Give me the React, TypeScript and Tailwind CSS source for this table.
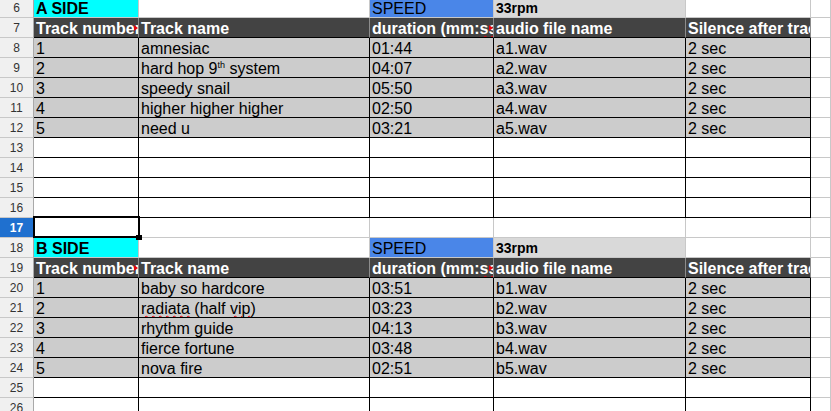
import React from 'react';

const W = ['w-[105px]', 'w-[231px]', 'w-[124px]', 'w-[192px]', 'w-[125px]'];

type Kind = 'label' | 'head' | 'data' | 'box' | 'plain';

interface CellProps {
  w: string;
  kind: Kind;
  bg?: string;
  bold?: boolean;
  arrow?: boolean;
  sel?: boolean;
  children?: React.ReactNode;
}

const Wavy: React.FC<{ children: React.ReactNode }> = ({ children }) => (
  <span className="underline decoration-wavy decoration-red-600 decoration-1 underline-offset-[1px]">
    {children}
  </span>
);

const Cell: React.FC<CellProps> = ({ w, kind, bg, bold, arrow, sel, children }) => {
  let border = 'border-[#c8c8c8]';
  if (kind === 'data' || kind === 'box') border = 'border-black';
  if (kind === 'head') border = 'border-r-[#8c8c8c] border-b-black';

  let tone = 'text-black';
  if (kind === 'head') tone = 'text-white font-bold bg-[#434343]';
  if (kind === 'data') tone = 'text-black bg-[#cccccc]';

  return (
    <div
      className={`${w} shrink-0 relative whitespace-nowrap border-r border-b pl-[2px] pt-px leading-[19px] ${
        sel ? '' : 'overflow-hidden'
      } ${border} ${tone} ${bg ?? ''} ${bold ? 'font-bold' : ''}`}
    >
      {children}
      {arrow && (
        <span className="absolute right-0 top-[7px] border-y-[3px] border-y-transparent border-l-[4px] border-l-red-600" />
      )}
      {sel && (
        <>
          <span className="absolute z-10 left-[-1px] top-[-2px] w-[107px] h-[22px] border-2 border-black" />
          <span className="absolute z-10 left-[102px] top-[17px] w-[6px] h-[5px] bg-black" />
        </>
      )}
    </div>
  );
};

const Row: React.FC<{ n: number; active?: boolean; children?: React.ReactNode }> = ({
  n,
  active,
  children,
}) => (
  <div className="flex h-[20px] shrink-0">
    <div
      className={`w-[34px] shrink-0 flex items-center justify-center border-r border-b border-r-[#a9a9a9] border-b-[#c8c8c8] text-[12px] ${
        active ? 'bg-[#1f70cf] text-white font-bold' : 'bg-[#f0f0f0] text-[#333333]'
      }`}
    >
      {n}
    </div>
    {children}
    <div className="flex-1 border-r border-b border-[#c8c8c8]" />
  </div>
);

const LabelRow: React.FC<{ n: number; side: string }> = ({ n, side }) => (
  <Row n={n}>
    <Cell w={W[0]} kind="label" bg="bg-[#00ffff]" bold>
      {side}
    </Cell>
    <Cell w={W[1]} kind="label" />
    <Cell w={W[2]} kind="label" bg="bg-[#4a86e8] text-[#14244a]">
      SPEED
    </Cell>
    <Cell w={W[3]} kind="label" bg="bg-[#d9d9d9] text-[14px]" bold>
      33rpm
    </Cell>
    <Cell w={W[4]} kind="label" />
  </Row>
);

const HeadRow: React.FC<{ n: number }> = ({ n }) => (
  <Row n={n}>
    <Cell w={W[0]} kind="head" arrow>
      Track number
    </Cell>
    <Cell w={W[1]} kind="head">
      Track name
    </Cell>
    <Cell w={W[2]} kind="head" arrow>
      duration (mm:<Wavy>ss</Wavy>)
    </Cell>
    <Cell w={W[3]} kind="head">
      audio file name
    </Cell>
    <Cell w={W[4]} kind="head">
      Silence after track
    </Cell>
  </Row>
);

const DataRow: React.FC<{ n: number; num: number; name: React.ReactNode; dur: string; file: string }> = ({
  n,
  num,
  name,
  dur,
  file,
}) => (
  <Row n={n}>
    <Cell w={W[0]} kind="data">
      {num}
    </Cell>
    <Cell w={W[1]} kind="data">
      {name}
    </Cell>
    <Cell w={W[2]} kind="data">
      {dur}
    </Cell>
    <Cell w={W[3]} kind="data">
      {file}
    </Cell>
    <Cell w={W[4]} kind="data">
      2 sec
    </Cell>
  </Row>
);

const EmptyRow: React.FC<{ n: number; kind: Kind; active?: boolean }> = ({ n, kind, active }) => (
  <Row n={n} active={active}>
    {W.map((w, i) => (
      <Cell key={i} w={w} kind={kind} sel={active && i === 0} />
    ))}
  </Row>
);

const sideA = [
  { num: 1, name: 'amnesiac', dur: '01:44', file: 'a1.wav' },
  {
    num: 2,
    name: (
      <>
        hard hop 9<span className="relative top-[-6px] text-[9px]">th</span> system
      </>
    ),
    dur: '04:07',
    file: 'a2.wav',
  },
  { num: 3, name: 'speedy snail', dur: '05:50', file: 'a3.wav' },
  { num: 4, name: 'higher higher higher', dur: '02:50', file: 'a4.wav' },
  { num: 5, name: 'need u', dur: '03:21', file: 'a5.wav' },
];

const sideB = [
  { num: 1, name: 'baby so hardcore', dur: '03:51', file: 'b1.wav' },
  {
    num: 2,
    name: (
      <>
        <Wavy>radiata</Wavy> (half <Wavy>vip</Wavy>)
      </>
    ),
    dur: '03:23',
    file: 'b2.wav',
  },
  { num: 3, name: 'rhythm guide', dur: '04:13', file: 'b3.wav' },
  { num: 4, name: 'fierce fortune', dur: '03:48', file: 'b4.wav' },
  { num: 5, name: 'nova fire', dur: '02:51', file: 'b5.wav' },
];

export default function App() {
  return (
    <div className="w-[831px] h-[411px] overflow-hidden bg-white font-['Liberation_Sans',Arial,sans-serif] text-[16px]">
      <div className="flex flex-col -mt-[2px]">
        <LabelRow n={6} side="A SIDE" />
        <HeadRow n={7} />
        {sideA.map((r, i) => (
          <DataRow key={r.file} n={8 + i} {...r} />
        ))}
        {[13, 14, 15, 16].map((n) => (
          <EmptyRow key={n} n={n} kind="box" />
        ))}
        <EmptyRow n={17} kind="plain" active />
        <LabelRow n={18} side="B SIDE" />
        <HeadRow n={19} />
        {sideB.map((r, i) => (
          <DataRow key={r.file} n={20 + i} {...r} />
        ))}
        <EmptyRow n={25} kind="box" />
        <EmptyRow n={26} kind="box" />
      </div>
    </div>
  );
}
